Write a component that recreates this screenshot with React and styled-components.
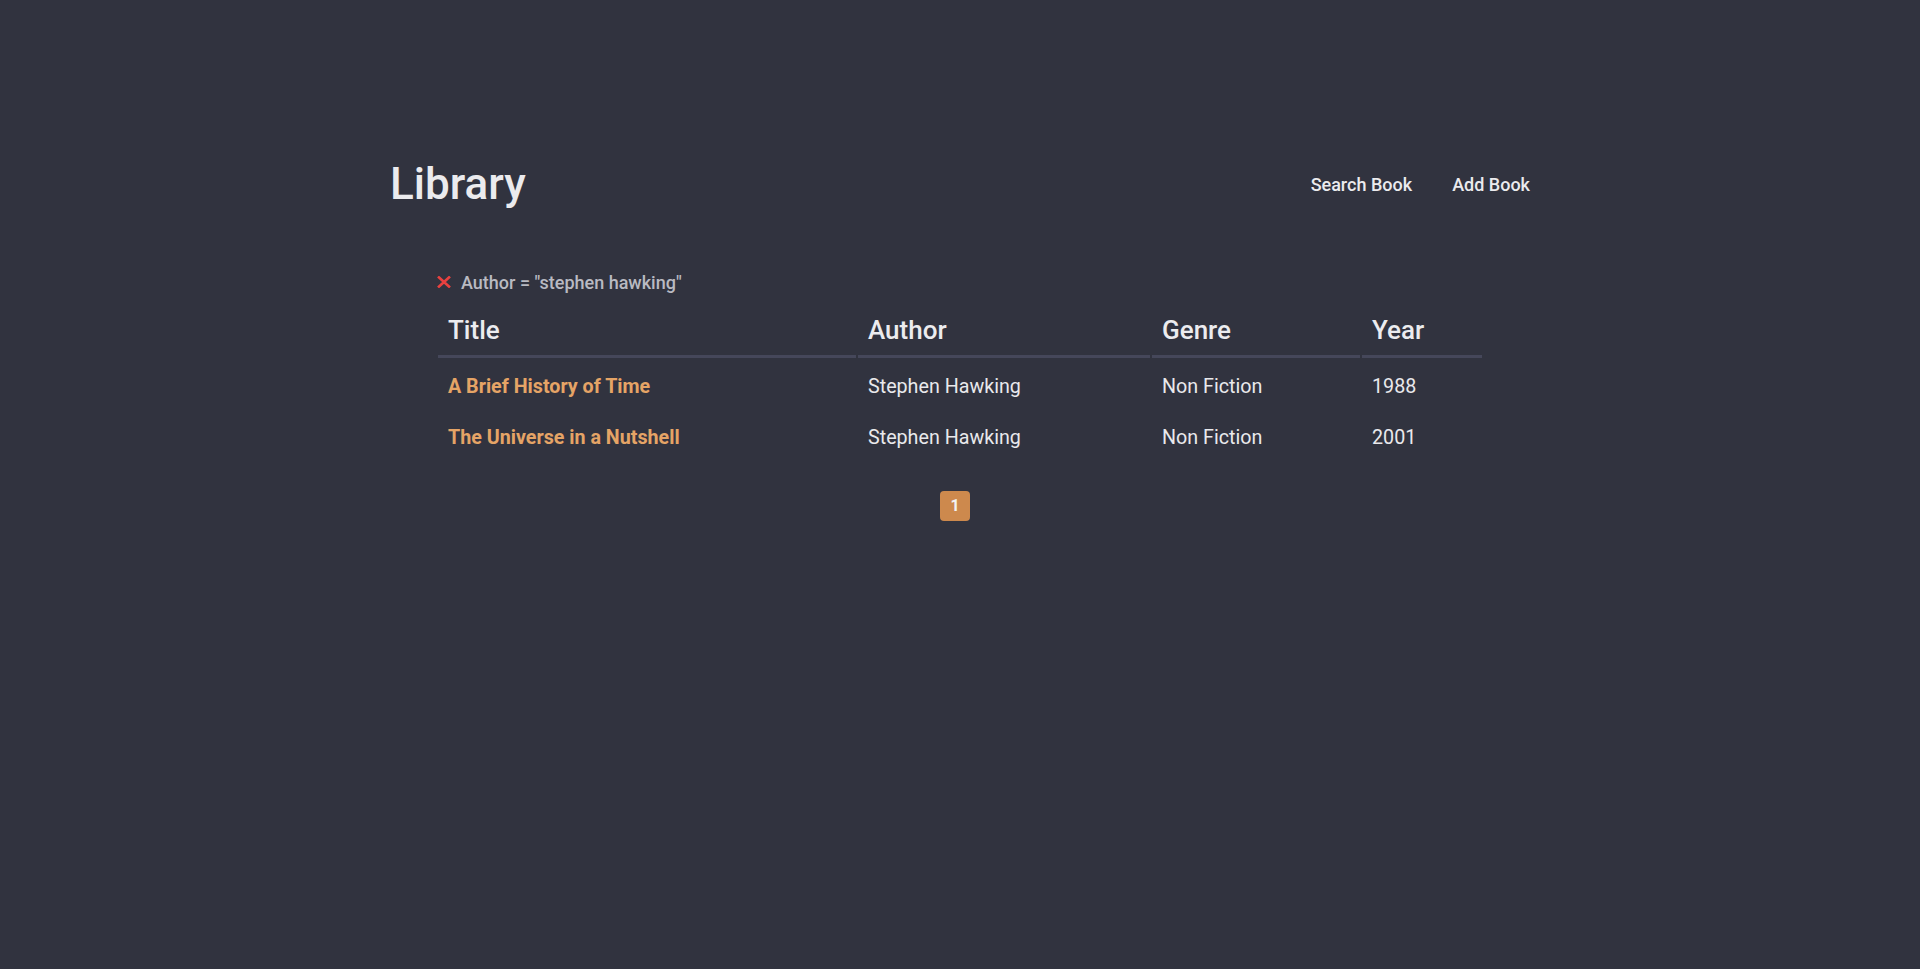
import styled, { createGlobalStyle } from "styled-components";

const GlobalStyle = createGlobalStyle`
  body {
    margin: 0;
    background: #31333f;
    color: #e9e9ec;
    font-family: Roboto, "Liberation Sans", sans-serif;
  }
`;

const Page = styled.div`
  width: 1140px;
  margin: 0 auto;
  padding-top: 158px;
`;

const Header = styled.header`
  display: flex;
  justify-content: space-between;
  align-items: center;
`;

const Logo = styled.h1`
  margin: 0;
  font-size: 44px;
  font-weight: 500;
  line-height: 1.2;
  color: #ebebee;
`;

const Nav = styled.nav`
  display: flex;
  gap: 40px;
`;

const NavLink = styled.a`
  font-size: 18px;
  font-weight: 500;
  line-height: 1.2;
  color: #ebebee;
  text-decoration: none;
  cursor: pointer;
`;

const Content = styled.section`
  padding: 0 46px;
  margin-top: 58px;
`;

const Filter = styled.div`
  display: flex;
  align-items: center;
  gap: 10px;
  font-size: 18px;
  font-weight: 500;
  line-height: 27px;
  color: #b9bac2;
  margin-bottom: 9px;
`;

const Remove = styled.button`
  display: flex;
  padding: 0;
  margin-left: 1px;
  border: none;
  background: none;
  cursor: pointer;
`;

const Table = styled.table`
  width: 100%;
  table-layout: fixed;
  border-spacing: 2px;
`;

const Th = styled.th`
  box-sizing: border-box;
  width: ${(p) => p.w}px;
  text-align: left;
  padding: 8px 10px 9px;
  font-size: 26px;
  font-weight: 500;
  line-height: 1.2;
  color: #ececef;
  border-bottom: 3px solid #45475a;
`;

const Td = styled.td`
  padding: 13px 10px 9px;
  font-size: 19.7px;
  line-height: 27px;
  color: #e9e9ec;
`;

const BookLink = styled.a`
  color: #e5a466;
  font-weight: 700;
  text-decoration: none;
  cursor: pointer;
`;

const Pagination = styled.div`
  display: flex;
  justify-content: center;
  padding-right: 10px;
  margin-top: 29px;
`;

const PageButton = styled.button`
  width: 30px;
  height: 30px;
  border: none;
  border-radius: 4px;
  background: #cd894d;
  color: #f3f3f3;
  font-family: Roboto, "Liberation Sans", sans-serif;
  font-size: 16px;
  font-weight: 700;
  cursor: pointer;
`;

const books = [
  { title: "A Brief History of Time", author: "Stephen Hawking", genre: "Non Fiction", year: 1988 },
  { title: "The Universe in a Nutshell", author: "Stephen Hawking", genre: "Non Fiction", year: 2001 },
];

const CloseIcon = () => (
  <svg width="14" height="12" viewBox="0 0 14 12">
    <path d="M1 0.5 L13 11.5 M13 0.5 L1 11.5" stroke="#e8413f" strokeWidth="2.6" fill="none" />
  </svg>
);

const App = () => {
  return (
    <>
      <GlobalStyle />
      <Page>
        <Header>
          <Logo>Library</Logo>
          <Nav>
            <NavLink>Search Book</NavLink>
            <NavLink>Add Book</NavLink>
          </Nav>
        </Header>
        <Content>
          <Filter>
            <Remove>
              <CloseIcon />
            </Remove>
            Author = "stephen hawking"
          </Filter>
          <Table>
            <thead>
              <tr>
                <Th w={418}>Title</Th>
                <Th w={292}>Author</Th>
                <Th w={208}>Genre</Th>
                <Th w={120}>Year</Th>
              </tr>
            </thead>
            <tbody>
              {books.map((b) => (
                <tr key={b.title}>
                  <Td>
                    <BookLink>{b.title}</BookLink>
                  </Td>
                  <Td>{b.author}</Td>
                  <Td>{b.genre}</Td>
                  <Td>{b.year}</Td>
                </tr>
              ))}
            </tbody>
          </Table>
          <Pagination>
            <PageButton>1</PageButton>
          </Pagination>
        </Content>
      </Page>
    </>
  );
};

export default App;
